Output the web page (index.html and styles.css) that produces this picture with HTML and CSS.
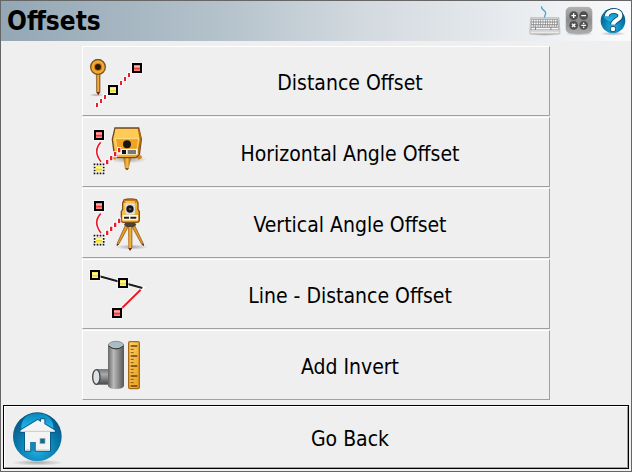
FILE: index.html
```html
<!DOCTYPE html>
<html lang="en">
<head>
    <meta charset="UTF-8">
    <meta name="viewport" content="width=device-width, initial-scale=1.0">
    <title>Offsets</title>
    <link rel="stylesheet" href="styles.css">
</head>
<body>
    <!-- shared gradients and markers -->
    <svg class="defs" width="0" height="0" aria-hidden="true">
        <defs>
            <linearGradient id="gold" x1="0" y1="0" x2="1" y2="1">
                <stop offset="0" stop-color="#ffd468"/>
                <stop offset="1" stop-color="#e99a16"/>
            </linearGradient>
            <linearGradient id="red" x1="0" y1="0" x2="0" y2="1">
                <stop offset="0" stop-color="#f56060"/>
                <stop offset="0.3" stop-color="#ffc4c0"/>
                <stop offset="0.55" stop-color="#ee3333"/>
                <stop offset="1" stop-color="#ff9c90"/>
            </linearGradient>
            <linearGradient id="yellow" x1="0" y1="0" x2="0" y2="1">
                <stop offset="0" stop-color="#f0e040"/>
                <stop offset="0.35" stop-color="#fffcc8"/>
                <stop offset="0.55" stop-color="#ecd820"/>
                <stop offset="1" stop-color="#fff69a"/>
            </linearGradient>
            <linearGradient id="leg" x1="0" y1="0" x2="1" y2="0">
                <stop offset="0" stop-color="#a86510"/>
                <stop offset="0.5" stop-color="#ffbe48"/>
                <stop offset="1" stop-color="#9a5c10"/>
            </linearGradient>
            <linearGradient id="pipe" x1="0" y1="0" x2="1" y2="0">
                <stop offset="0" stop-color="#666"/>
                <stop offset="0.35" stop-color="#bbb"/>
                <stop offset="1" stop-color="#555"/>
            </linearGradient>
            <linearGradient id="pipe-side" x1="0" y1="0" x2="0" y2="1">
                <stop offset="0" stop-color="#777"/>
                <stop offset="0.35" stop-color="#aaa"/>
                <stop offset="1" stop-color="#484848"/>
            </linearGradient>
            <linearGradient id="key-gray" x1="0" y1="0" x2="0" y2="1">
                <stop offset="0" stop-color="#b0b0b0"/>
                <stop offset="0.5" stop-color="#8a8a8a"/>
                <stop offset="1" stop-color="#acacac"/>
            </linearGradient>
            <radialGradient id="blue" cx="0.5" cy="0.75" r="0.75">
                <stop offset="0" stop-color="#20b4e4"/>
                <stop offset="0.55" stop-color="#0878ac"/>
                <stop offset="1" stop-color="#08507c"/>
            </radialGradient>
            <linearGradient id="gloss" x1="0" y1="0" x2="0" y2="1">
                <stop offset="0" stop-color="#0c86b8"/>
                <stop offset="1" stop-color="#20bcf0"/>
            </linearGradient>
            <radialGradient id="shadow">
                <stop offset="0" stop-color="#000" stop-opacity="0.3"/>
                <stop offset="1" stop-color="#000" stop-opacity="0"/>
            </radialGradient>
            <g id="point">
                <rect x="-17" y="-17" width="34" height="34" fill="#fff" opacity="0.7"/>
                <rect x="-15" y="-15" width="30" height="30" fill="#000"/>
            </g>
            <g id="red-point">
                <use href="#point"/>
                <rect x="-9" y="-9" width="18" height="18" fill="url(#red)"/>
            </g>
            <g id="yellow-point">
                <use href="#point"/>
                <rect x="-9" y="-9" width="18" height="18" fill="url(#yellow)"/>
            </g>
            <g id="angle">
                <path d="M74 91Q50 117 75 149" fill="none" stroke="#fff" stroke-width="9"/>
                <path d="M74 91Q50 117 75 149" fill="none" stroke="#e81c2c" stroke-width="5"/>
                <rect x="54" y="155" width="31" height="31" fill="#fff"/>
                <rect x="60" y="161" width="19" height="19" fill="url(#yellow)"/>
                <path d="M53 157H86M53 184H86" stroke="#111" stroke-width="5" stroke-dasharray="5 4"/>
                <path d="M56 164V178M83 164V178" stroke="#111" stroke-width="5" stroke-dasharray="5 4"/>
            </g>
            <g id="sight">
                <path d="M90 144h7v13h-7zM102 132h7v13h-7zM114 120h7v13h-7zM126 108h7v13h-7z" fill="#e81c2c" stroke="#fff" stroke-width="5" paint-order="stroke"/>
            </g>
        </defs>
    </svg>

    <header class="title-bar">
        <h1>Offsets</h1>
        <button class="tool" type="button" aria-label="Keyboard">
            <svg viewBox="84 3 102 120">
                <ellipse cx="134" cy="103" rx="50" ry="5" fill="url(#shadow)"/>
                <path d="M125 19C122 31 137 29 137 39C137 46 132 47 134 53" fill="none" stroke="#48a8cc" stroke-width="4"/>
                <path d="M92 53H177L180 99Q180 102 177 102H92Q89 102 89 99Z" fill="#d4d4d4" stroke="#b0b0b0" stroke-width="2"/>
                <path d="M94 58H174L176 90H92Z" fill="#888"/>
                <path d="M95 62H173M95 70H173M94 78H174" stroke="#f8f8f8" stroke-width="5" stroke-dasharray="5 2"/>
                <path d="M94 86H105M108 86H151M154 86H175" stroke="#f8f8f8" stroke-width="5"/>
                <path d="M91 97H178" stroke="#eee" stroke-width="3"/>
            </svg>
        </button>
        <button class="tool" type="button" aria-label="Calculator">
            <svg viewBox="186 3 102 120">
                <ellipse cx="237" cy="101" rx="44" ry="6" fill="url(#shadow)"/>
                <rect x="198" y="22" width="78" height="77" rx="13" fill="url(#key-gray)" stroke="#a4a4a4" stroke-width="2"/>
                <g fill="#505050">
                    <circle cx="221" cy="47" r="13"/>
                    <circle cx="251" cy="47" r="13"/>
                    <circle cx="221" cy="76" r="13"/>
                    <circle cx="251" cy="76" r="13"/>
                </g>
                <path d="M214 47H228M221 40V54M244 47H258M216 71L226 81M226 71L216 81M244 76H258" stroke="#fff" stroke-width="4"/>
                <circle cx="251" cy="70" r="2.5" fill="#fff"/>
                <circle cx="251" cy="82" r="2.5" fill="#fff"/>
            </svg>
        </button>
        <button class="tool" type="button" aria-label="Help">
            <svg viewBox="288 3 102 120">
                <ellipse cx="339" cy="101" rx="40" ry="6" fill="url(#shadow)"/>
                <circle cx="339" cy="62" r="37" fill="url(#blue)"/>
                <ellipse cx="339" cy="46" rx="29" ry="19" fill="url(#gloss)"/>
                <path d="M320 49C321 29 361 27 361 47C361 60 340 60 339 74" fill="none" stroke="#064a70" stroke-width="17"/>
                <circle cx="339" cy="87" r="9" fill="#064a70"/>
                <path d="M320 49C321 29 361 27 361 47C361 60 340 60 339 74" fill="none" stroke="#fff" stroke-width="12"/>
                <circle cx="339" cy="87" r="7" fill="#fff"/>
            </svg>
        </button>
    </header>

    <main class="menu">
        <button class="menu-item" type="button">
            <svg class="icon" viewBox="21 21 204 204">
                <ellipse cx="62" cy="165" rx="22" ry="5" fill="url(#shadow)"/>
                <path d="M61 100H72V157L67 164L62 157Z" fill="url(#leg)" stroke="#805020" stroke-width="2"/>
                <path d="M62 156H71L67 165Z" fill="#702010"/>
                <rect x="57" y="57" width="18" height="8" rx="3" fill="#8a6838"/>
                <circle cx="66" cy="81" r="22" fill="#f4aa28" stroke="#765329" stroke-width="4"/>
                <circle cx="66" cy="81" r="12" fill="#c87816"/>
                <circle cx="66" cy="81" r="9" fill="#2a1a10"/>
                <path d="M60 189h6v12h-6zM72 177h6v12h-6zM84 165h6v12h-6zM132 123h6v12h-6zM144 111h6v12h-6zM156 99h6v12h-6z" fill="#e81c2c" stroke="#fff" stroke-width="5" paint-order="stroke"/>
                <use href="#yellow-point" x="111" y="150"/>
                <use href="#red-point" x="183" y="84"/>
            </svg>
            <span class="label">Distance Offset</span>
        </button>
        <button class="menu-item" type="button">
            <svg class="icon" viewBox="21 18 204 204">
                <ellipse cx="156" cy="142" rx="58" ry="12" fill="url(#shadow)"/>
                <path d="M142 138H165L158 170L153 174L147 170Z" fill="url(#leg)"/>
                <path d="M147 169H159L153 175Z" fill="#703010"/>
                <path d="M110 129L125 135L117 143L108 138ZM196 129L181 135L188 143L198 138Z" fill="#d98316"/>
                <path d="M117 48H188L196 82L190 128L180 137H125L115 128L109 82Z" fill="url(#gold)" stroke="#6f4820" stroke-width="4"/>
                <path d="M119 51H186L190 80H117Z" fill="#ffca55"/>
                <path d="M118 80H188L183 112H124Z" fill="#efa320" stroke="#fff0b0" stroke-width="2"/>
                <path d="M188 51L194 82L187 124" fill="none" stroke="#ac6813" stroke-width="5"/>
                <circle cx="153" cy="97" r="12" fill="#171717"/>
                <rect x="124" y="111" width="61" height="17" fill="#f6f6f6"/>
                <rect x="138" y="114" width="12" height="12" fill="#111"/>
                <rect x="155" y="114" width="25" height="12" fill="#777"/>
                <use href="#angle"/>
                <use href="#sight"/>
                <use href="#red-point" x="69" y="69"/>
            </svg>
            <span class="label">Horizontal Angle Offset</span>
        </button>
        <button class="menu-item" type="button">
            <svg class="icon" viewBox="21 15 204 204">
                <ellipse cx="168" cy="189" rx="50" ry="8" fill="url(#shadow)"/>
                <path d="M149 122L157 128L128 181L123 184L124 177ZM175 122L168 128L197 181L203 184L201 177Z" fill="#e99a20" stroke="#754813" stroke-width="2"/>
                <path d="M156 124H169V192L162 199L157 192Z" fill="url(#leg)"/>
                <path d="M157 192H168L162 201ZM123 180L129 180L122 187ZM197 180L203 179V187Z" fill="#702010"/>
                <path d="M149 114H175L181 122L173 129H152L144 122Z" fill="#4a4034"/>
                <path d="M145 47Q162 43 181 47L186 57V76L190 83V110Q189 115 182 115H142Q136 115 136 109V83L140 76V57Z" fill="url(#gold)" stroke="#805018" stroke-width="4"/>
                <path d="M146 57V49H179V57" fill="none" stroke="#c87b18" stroke-width="4"/>
                <rect x="148" y="58" width="29" height="34" rx="5" fill="#ddd"/>
                <circle cx="162" cy="75" r="11" fill="#161616"/>
                <circle cx="162" cy="75" r="4" fill="#555"/>
                <path d="M140 93H186V109H140Z" fill="#fff8e5"/>
                <path d="M144 101H159M163 101H181" stroke="#222" stroke-width="6"/>
                <use href="#angle" y="-2"/>
                <use href="#sight" y="-4"/>
                <use href="#red-point" x="69" y="66"/>
            </svg>
            <span class="label">Vertical Angle Offset</span>
        </button>
        <button class="menu-item" type="button">
            <svg class="icon" viewBox="21 12 204 204">
                <path d="M57 57L199 96L123 171" fill="none" stroke="#fff" stroke-width="10"/>
                <path d="M194 101L123 171" stroke="#ee1824" stroke-width="6"/>
                <path d="M57 57L199 96" stroke="#1c1c1c" stroke-width="6"/>
                <use href="#yellow-point" x="57" y="57"/>
                <use href="#yellow-point" x="141" y="81"/>
                <use href="#red-point" x="123" y="171"/>
            </svg>
            <span class="label">Line - Distance Offset</span>
        </button>
        <button class="menu-item" type="button">
            <svg class="icon" viewBox="21 9 204 204">
                <path d="M60 123H105V170H60Z" fill="url(#pipe-side)"/>
                <path d="M96 50V174Q99 183 120 183Q141 183 144 174V50Z" fill="url(#pipe)"/>
                <ellipse cx="120" cy="51" rx="23" ry="11" fill="#a9bdc7" stroke="#707070" stroke-width="2"/>
                <path d="M98 54Q120 72 142 54" fill="none" stroke="#333" stroke-width="3"/>
                <ellipse cx="61" cy="147" rx="11" ry="22" fill="#dce1e5" stroke="#454545" stroke-width="4"/>
                <rect x="158" y="41" width="32" height="141" rx="4" fill="url(#gold)" stroke="#a76816" stroke-width="4"/>
                <path d="M164 54H184M164 84H184M164 114H184M164 144H184M164 174H184" stroke="#694018" stroke-width="4"/>
                <path d="M164 64H173M164 74H173M164 94H173M164 104H173M164 124H173M164 134H173M164 154H173M164 164H173" stroke="#845318" stroke-width="3"/>
            </svg>
            <span class="label">Add Invert</span>
        </button>
    </main>

    <footer class="bottom">
        <button class="go-back" type="button">
            <svg class="icon home" viewBox="15 33 204 180">
                <ellipse cx="112" cy="200" rx="78" ry="9" fill="url(#shadow)"/>
                <circle cx="112" cy="122" r="73" fill="url(#blue)"/>
                <path d="M64 99C62 68 82 52 112 52S162 68 160 99Z" fill="url(#gloss)"/>
                <path d="M62 103L113 72L123 78V70H133V84L164 103V108H150V164H107V138H91V164H75V108H62Z" fill="#f4f4f4" stroke="#075d88" stroke-width="6" stroke-linejoin="round" paint-order="stroke"/>
                <path d="M62 106H164M78 161H89M109 162H148" stroke="#c5cbd0" stroke-width="3"/>
                <path d="M91 164V138H106V164Z" fill="#1685b4"/>
                <rect x="120" y="127" width="15" height="16" fill="#086d99" stroke="#aaa" stroke-width="2"/>
            </svg>
            <span class="label">Go Back</span>
        </button>
    </footer>
</body>
</html>
```
FILE: styles.css
```css
* {
    box-sizing: border-box;
}

body {
    margin: 0;
    min-height: 100vh;
    display: flex;
    flex-direction: column;
    border: 1px solid #666;
    background-color: #efefef;
    color: #000;
    font-family: 'DejaVu Sans Condensed', 'Noto Sans', sans-serif;
}

.defs {
    position: absolute;
}

.title-bar {
    display: flex;
    align-items: center;
    height: 40px;
    padding: 0 1px 0 6px;
    background: linear-gradient(to right, #94a7b5, #b4c2cb 35%, #d2d9df 57%, #f9fafb);
}

h1 {
    flex: 1;
    margin: 0;
    font-size: 26px;
    line-height: 40px;
}

button {
    padding: 0;
    background-color: #efefef;
    color: inherit;
    font-family: inherit;
    font-size: 21px;
    cursor: pointer;
}

.tool {
    width: 34px;
    height: 40px;
    border: none;
    background: none;
}

.tool svg {
    display: block;
    width: 34px;
    height: 40px;
}

.menu {
    flex: 1;
    display: flex;
    flex-direction: column;
    gap: 1px;
    padding: 5px 81px;
}

.menu-item,
.go-back {
    display: flex;
    align-items: center;
    width: 100%;
    border: 1px solid;
    border-color: #fff #a0a0a0 #a0a0a0 #fff;
}

.menu-item {
    height: 70px;
}

.icon {
    flex: none;
    width: 68px;
    height: 68px;
}

.label {
    flex: 1;
    padding-top: 4px;
    text-align: center;
}

.bottom {
    margin: 0 2px 2px;
    border: 1px solid #000;
}

.home {
    height: 60px;
}
```
